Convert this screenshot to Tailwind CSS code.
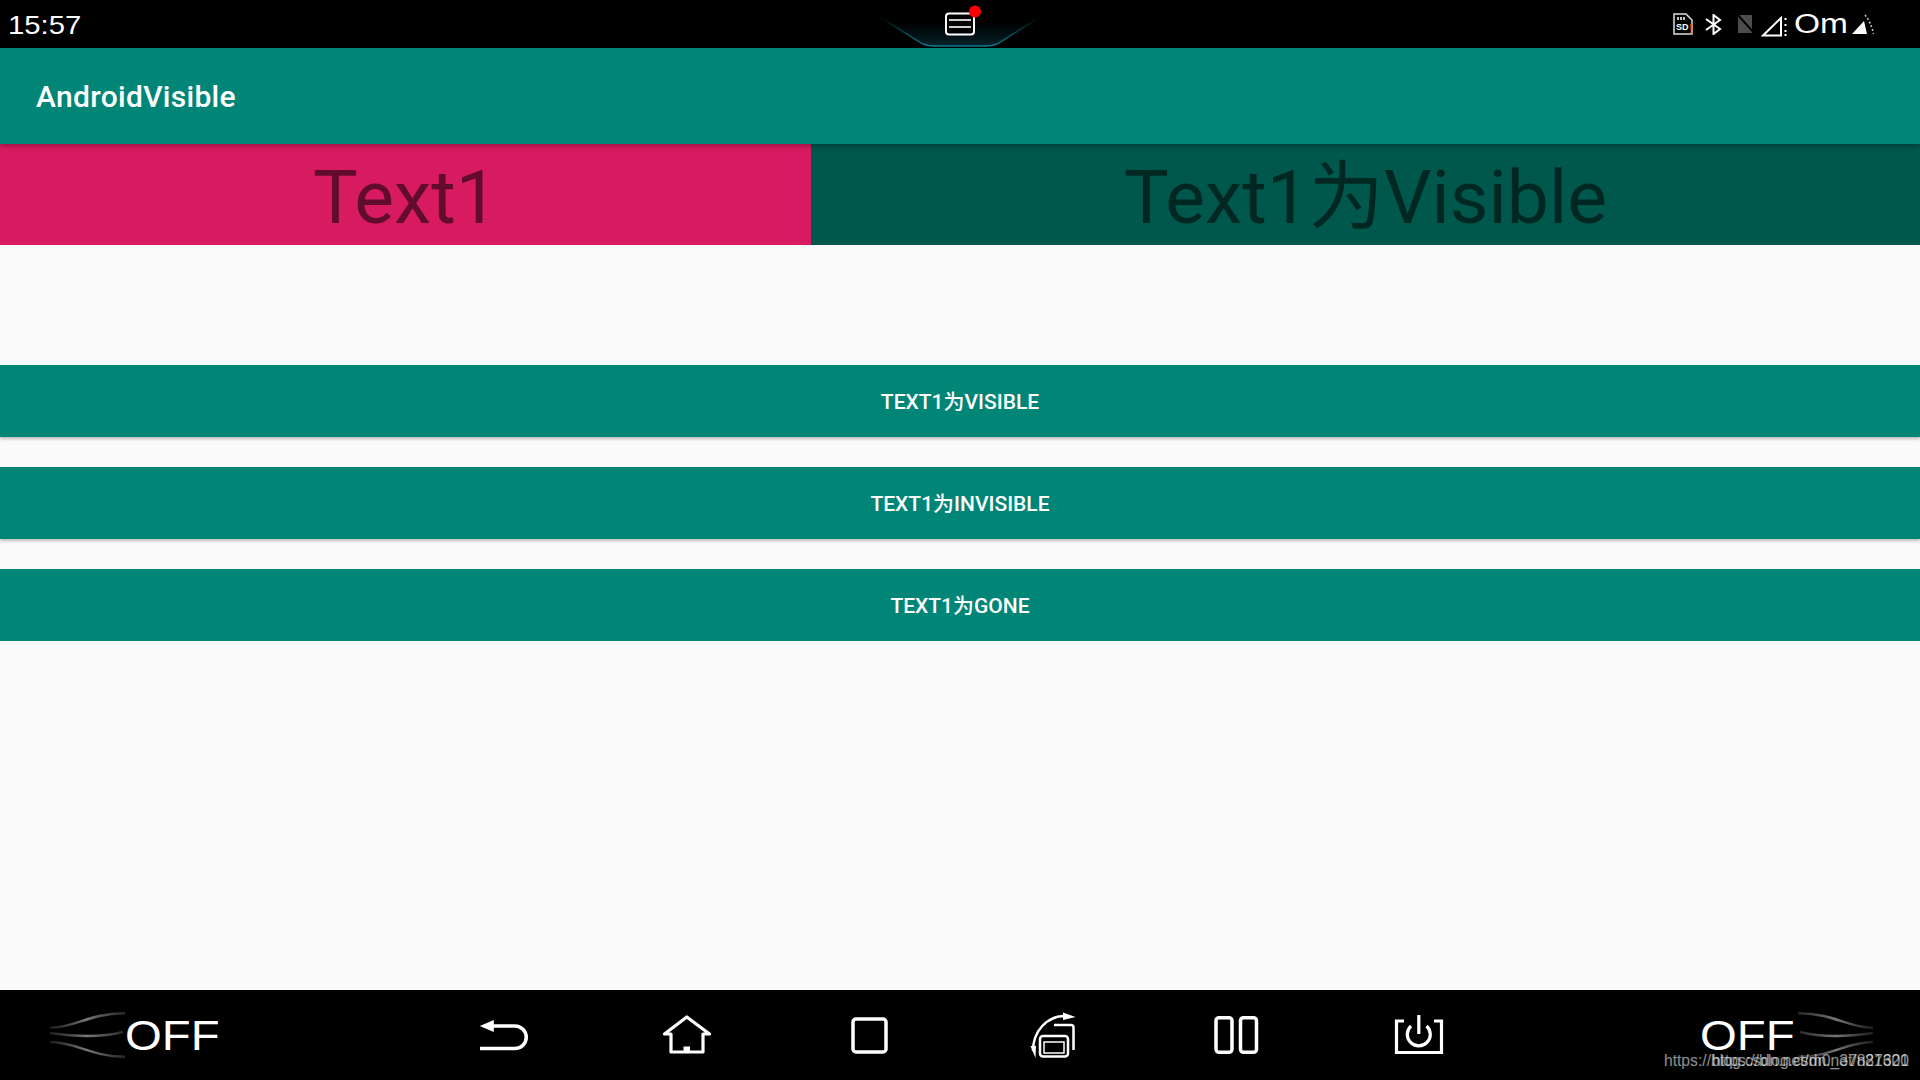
<!DOCTYPE html>
<html lang="en">
<head>
    <meta charset="UTF-8">
    <title>AndroidVisible</title>
    <script src="https://cdn.jsdelivr.net/npm/@tailwindcss/browser@4"></script>
</head>
<body class="bg-[#fafafa] font-['Roboto','Noto_Sans_CJK_SC',sans-serif]">
<div class="h-[1080px] w-[1920px] flex flex-col overflow-hidden relative">

    <!-- status bar -->
    <div class="h-12 bg-black relative flex items-center justify-between shrink-0">
        <span class="ml-[8px] text-white text-[25px] leading-none font-['Liberation_Sans',sans-serif] origin-left scale-x-[1.17] pt-[3px]">15:57</span>

        <!-- notification handle -->
        <svg class="absolute left-[860px] top-0" width="200" height="48" viewBox="0 0 200 48">
            <defs>
                <linearGradient id="glow" x1="0" y1="0" x2="0" y2="1">
                    <stop offset="0.2" stop-color="#0e6f85" stop-opacity="0"/>
                    <stop offset="1" stop-color="#0e6f85" stop-opacity="0.5"/>
                </linearGradient>
                <linearGradient id="rim" x1="0" y1="0" x2="1" y2="0">
                    <stop offset="0" stop-color="#0e6f85" stop-opacity="0"/>
                    <stop offset="0.3" stop-color="#0e7f95"/>
                    <stop offset="0.7" stop-color="#0e7f95"/>
                    <stop offset="1" stop-color="#0e6f85" stop-opacity="0"/>
                </linearGradient>
            </defs>
            <path d="M20 17 58 41Q64 46 74 46H126Q136 46 142 41L180 17Z" fill="url(#glow)" opacity="0.6"/>
            <path d="M20 17 58 41Q64 46 74 46H126Q136 46 142 41L180 17" fill="none" stroke="url(#rim)" stroke-width="1.5"/>
            <rect x="86" y="13.5" width="28" height="21" rx="3" fill="#000" stroke="#fff" stroke-width="2"/>
            <path d="M89 20H111M89 27H111" stroke="#ccc" stroke-width="2"/>
            <circle cx="115" cy="11.5" r="6" fill="#f00"/>
        </svg>

        <div class="flex items-center mr-[45px] text-white">
            <!-- sd card -->
            <svg width="21" height="22" viewBox="0 0 21 22" fill="none">
                <path d="M1 1H13L19 7V21H1Z" stroke="#ddd" stroke-width="1.5"/>
                <path d="M5 4V7M8 4V7M11 4V7" stroke="#fff" stroke-width="1.5"/>
                <text x="3" y="17" fill="#fff" font-size="9" font-weight="700" font-family="Liberation Sans">SD</text>
                <path d="M18.5 11V17M18.5 18.5V20.5" stroke="#f60" stroke-width="2"/>
            </svg>
            <!-- bluetooth -->
            <svg class="ml-[11px]" width="17" height="21" viewBox="0 0 17 21" fill="none" stroke="#fff" stroke-width="2">
                <path d="M1 5 15 15 8.5 20V1L15 6 1 16"/>
            </svg>
            <!-- no sim -->
            <svg class="ml-[15px]" width="18" height="20" viewBox="0 0 18 20">
                <path d="M1 1H15V19H1Z" fill="#4d4d4d"/>
                <path d="M0 0 18 20" stroke="#000" stroke-width="2"/>
            </svg>
            <!-- signal -->
            <svg class="ml-[6px] mt-[4px]" width="26" height="21" viewBox="0 0 26 21" fill="none">
                <path d="M2 19.5 20 2V19.5Z" stroke="#fff" stroke-width="2"/>
                <path d="M24.5 2V4M24.5 8V10M24.5 14V16M24.5 18V20" stroke="#fff" stroke-width="2"/>
            </svg>
            <span class="ml-[7px] w-[53px] text-[27px] leading-none font-['Liberation_Sans',sans-serif] origin-left scale-x-[1.24]">Om</span>
            <!-- wifi triangle -->
            <svg class="ml-[5px]" width="23" height="21" viewBox="0 0 23 21" fill="none">
                <path d="M0 20 12 7 15 20Z" fill="#fff"/>
                <path d="M13 1Q19 8 21.5 20" stroke="#ccc" stroke-width="1.5" stroke-dasharray="2 2"/>
            </svg>
        </div>
    </div>

    <!-- app bar -->
    <div class="h-24 bg-[#008577] flex items-center pl-9 shadow-[0_2px_5px_rgba(0,0,0,0.3)] z-10 shrink-0">
        <h1 class="text-white text-[30px] font-medium tracking-[0.3px]">AndroidVisible</h1>
    </div>

    <main class="flex-1">
        <div class="flex h-[101px]">
            <div class="w-[811px] bg-[#d81b60] text-black/55 text-[75px] pt-[6px] flex items-center justify-center">Text1</div>
            <div class="flex-1 bg-[#00574b] text-black/55 text-[75px] pt-[6px] flex items-center justify-center">Text1为Visible</div>
        </div>
        <div class="mt-[120px] flex flex-col gap-[30px]">
            <button class="h-[72px] pt-1 bg-[#008577] text-white text-[21px] font-medium shadow-[0_2px_3px_rgba(0,0,0,0.25)]">TEXT1为VISIBLE</button>
            <button class="h-[72px] pt-1 bg-[#008577] text-white text-[21px] font-medium shadow-[0_2px_3px_rgba(0,0,0,0.25)]">TEXT1为INVISIBLE</button>
            <button class="h-[72px] pt-1 bg-[#008577] text-white text-[21px] font-medium">TEXT1为GONE</button>
        </div>
    </main>

    <!-- bottom control bar -->
    <div class="h-[90px] bg-black grid grid-cols-[1fr_auto_1fr] items-center shrink-0">
        <div class="flex items-center pl-[48px]">
            <svg width="77" height="46" viewBox="0 0 77 46" fill="none" stroke="url(#swooshL)" stroke-width="2.5">
                <defs>
                    <linearGradient id="swooshL" gradientUnits="userSpaceOnUse" x1="0" y1="0" x2="77" y2="0">
                        <stop offset="0" stop-color="#555" stop-opacity="0.3"/>
                        <stop offset="0.5" stop-color="#777"/>
                        <stop offset="1" stop-color="#666" stop-opacity="0.4"/>
                    </linearGradient>
                </defs>
                <path d="M2 15.7C29 15.7 39 1.3 77 1.3"/>
                <path d="M2 21C29 25 52 26 75 20"/>
                <path d="M2 30C29 30 42 44.7 77 44.7"/>
            </svg>
            <span class="text-white text-[43px] leading-none font-['Liberation_Sans',sans-serif] origin-left scale-x-[1.1]">OFF</span>
        </div>

        <div class="flex">
            <!-- back -->
            <div class="w-[183px] flex justify-center">
                <svg width="60" height="60" viewBox="0 0 60 60" fill="none" stroke="#fff" stroke-width="3.5">
                    <path d="M18 21H42a11 11 0 0 1 0 22.5H7"/>
                    <path d="M6.8 21 20.8 15V27Z" fill="#fff" stroke="none"/>
                </svg>
            </div>
            <!-- home -->
            <div class="w-[183px] flex justify-center">
                <svg width="60" height="60" viewBox="0 0 60 60" fill="none" stroke="#fff" stroke-width="3.2" stroke-linejoin="round">
                    <path d="M8.5 29 30.8 12 53.5 29H47V47H15V29Z"/>
                    <path d="M27.5 41.5H34V47H27.5Z" fill="#fff" stroke="none"/>
                </svg>
            </div>
            <!-- recents -->
            <div class="w-[183px] flex justify-center">
                <svg width="60" height="60" viewBox="0 0 60 60" fill="none" stroke="#fff" stroke-width="3.5">
                    <rect x="14" y="14" width="33" height="33" rx="3"/>
                </svg>
            </div>
            <!-- rotate -->
            <div class="w-[183px] flex justify-center">
                <svg width="60" height="60" viewBox="0 0 60 60" fill="none" stroke="#fff" stroke-width="2.5">
                    <path d="M11 46C11 26 25 11 43 11"/>
                    <path d="M53.5 12 41 7.5V15Z" fill="#fff" stroke="none"/>
                    <path d="M13.5 53 8.5 41H14Z" fill="#fff" stroke="none"/>
                    <path d="M32 20H49a2.5 2.5 0 0 1 2.5 2.5V45"/>
                    <rect x="18" y="31" width="28" height="20.5" rx="3"/>
                    <rect x="22" y="37" width="20" height="11" stroke-width="1.5"/>
                </svg>
            </div>
            <!-- split screen -->
            <div class="w-[183px] flex justify-center">
                <svg width="60" height="60" viewBox="0 0 60 60" fill="none" stroke="#fff" stroke-width="3.5">
                    <rect x="11" y="12.7" width="16" height="34.6" rx="3"/>
                    <rect x="35.5" y="12.7" width="16" height="34.6" rx="3"/>
                </svg>
            </div>
            <!-- power -->
            <div class="w-[183px] flex justify-center">
                <svg width="60" height="60" viewBox="0 0 60 60" fill="none" stroke="#fff" stroke-width="3.2">
                    <path d="M16 16H8.5V47.5H53.5V16H46"/>
                    <path d="M23 21a11.5 11.5 0 1 0 15.6 0"/>
                    <path d="M30.8 10V29"/>
                </svg>
            </div>
        </div>

        <div class="flex items-center justify-end pr-[45px]">
            <span class="w-[98px] text-white text-[43px] leading-none font-['Liberation_Sans',sans-serif] origin-left scale-x-[1.1]">OFF</span>
            <svg width="77" height="46" viewBox="0 0 77 46" fill="none" stroke="url(#swooshR)" stroke-width="2.5">
                <defs>
                    <linearGradient id="swooshR" gradientUnits="userSpaceOnUse" x1="0" y1="0" x2="77" y2="0">
                        <stop offset="0" stop-color="#666" stop-opacity="0.4"/>
                        <stop offset="0.5" stop-color="#777"/>
                        <stop offset="1" stop-color="#555" stop-opacity="0.3"/>
                    </linearGradient>
                </defs>
                <path d="M0 1.3C38 1.3 48 15.7 75 15.7"/>
                <path d="M2 20C25 26 48 25 75 21"/>
                <path d="M0 44.7C35 44.7 48 30 75 30"/>
            </svg>
        </div>
    </div>

    <!-- blog watermark, two stamps on top of each other -->
    <span class="absolute right-[11px] bottom-[11px] text-[15.7px] leading-none text-white/55 font-['Liberation_Sans',sans-serif]">https://blog.csdn.net/m0_37821600</span>
    <span class="absolute right-[11px] bottom-[11px] text-[15.7px] leading-none text-white/55 font-['Liberation_Sans',sans-serif]">https://blog.csdn.net/n87321</span>
</div>
</body>
</html>
